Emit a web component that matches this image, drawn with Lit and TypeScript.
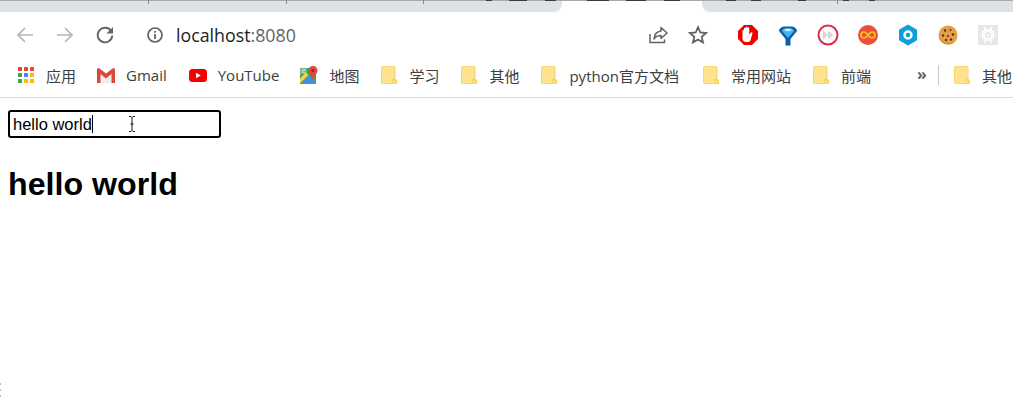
import { LitElement, html, css, svg } from "lit";
import { customElement } from "lit/decorators.js";

const folder = html`<svg class="ico fold" viewBox="0 0 16 18" width="16" height="18">
  <rect x=".5" y=".5" width="13.500" height="17" rx="1" fill="#fee28c" stroke="#f9d66e" stroke-width="1"/>
  <path d="M11.500 13h3l1.500 1v4h-4.500z" fill="#fbd155"/>
  <rect x="12.500" y="14.500" width="2" height="2.500" fill="#fee28c"/>
</svg>`;

const apps = html`<svg class="ico" viewBox="0 0 16 16" width="16" height="16">
  ${[0, 6, 12].map((y, r) =>
    [0, 6, 12].map((x, c) => {
      const colors = [
        ["#ea4335", "#ea4335", "#ea4335"],
        ["#34a853", "#4285f4", "#fbbc04"],
        ["#34a853", "#fbbc04", "#fbbc04"],
      ];
      return svg`<rect x=${x} y=${y} width="4" height="4" rx=".5" fill=${colors[r][c]} />`;
    })
  )}
</svg>`;

const gmail = html`<svg class="ico" viewBox="0 0 18 15" width="18" height="15">
  <path d="M3.500 5 9 9.500 14.500 5v10h-11z" fill="#eeeeee"/>
  <path d="M0 1.500C0 .3 1.500-.3 2.500.500L9 5.500 15.500.500C16.500-.3 18 .3 18 1.500V15h-3.500V6L9 10.500 3.500 6v9H0z" fill="#d8483d"/>
</svg>`;

const youtube = html`<svg class="ico" viewBox="0 0 18 13" width="18" height="13">
  <rect width="18" height="13" rx="3.500" fill="#f40000"/>
  <path d="M7 3.700v5.600L11.800 6.500z" fill="#fff"/>
</svg>`;

const maps = html`<svg class="ico" viewBox="0 0 18 18" width="18" height="18">
  <path d="M0 2h16v16H0z" fill="#35a853"/>
  <path d="M0 2h8L0 10z" fill="#7fb58a"/>
  <circle cx="4" cy="5.500" r="1.700" fill="none" stroke="#e8f3e8" stroke-width="1"/>
  <path d="M1.500 18 9 9.500l7 8.500z" fill="#4a8af4"/>
  <path d="M0 12.500 6 6.500l2.500 2.500L0 17.500z" fill="#fbd04a"/>
  <path d="M13 0c-2.700 0-4.500 2-4.500 4.500 0 3 3.500 5 4.500 10 1-5 4.500-7 4.500-10C17.500 2 15.700 0 13 0z" fill="#e0483c"/>
  <circle cx="13" cy="4.500" r="1.500" fill="#8f2a22"/>
</svg>`;

interface Mark { icon: unknown; label: string; cls: string }
const marks: Mark[] = [
  { icon: apps, label: "应用", cls: "tight" },
  { icon: gmail, label: "Gmail", cls: "wide" },
  { icon: youtube, label: "YouTube", cls: "wide tight" },
  { icon: maps, label: "地图", cls: "wide" },
  { icon: folder, label: "学习", cls: "" },
  { icon: folder, label: "其他", cls: "" },
  { icon: folder, label: "python官方文档", cls: "loose" },
  { icon: folder, label: "常用网站", cls: "" },
  { icon: folder, label: "前端", cls: "" },
];

const exts = [
  html`<svg viewBox="0 0 22 22" width="22" height="22">
    <path d="M7 1h8l6 6v8l-6 6H7l-6-6V7z" fill="#f40000"/>
    <path d="M5.500 11V6.500c0-1 1.500-1 1.500 0V4.500c0-1 1.700-1 1.700 0V3.500c0-1 1.800-1 1.800 0V4c0-1 1.700-1 1.700 0v6.500l1.800-2c.8-.8 2 0 1.400 1L13.500 16.500c-.5.8-1.200 1.500-2.500 1.500H9c-2 0-3.500-1.500-3.500-3.500z" fill="#fff"/>
  </svg>`,
  html`<svg viewBox="0 0 22 22" width="22" height="22">
    <path d="M2 7C2 4.500 5 2.500 8 2.500h6c3 0 6 2 6 4.500l-6.500 8v6.500h-5V15z" fill="#0b5fa8"/>
    <path d="M5 7c0-2 3-3 6-3s6 1 6 3l-6 7z" fill="#45b3ec"/>
    <path d="M7 6c1-1.500 7-1.500 8 0-2 1.500-6 1.500-8 0z" fill="#d6f1fd"/>
  </svg>`,
  html`<svg viewBox="0 0 22 22" width="22" height="22">
    <circle cx="11" cy="11" r="9.500" fill="#fff" stroke="#e5294b" stroke-width="2"/>
    <path d="M6 6.500v9l5-4.500zM11 6.500v9l5.500-4.500z" fill="#d5d5d5"/>
  </svg>`,
  html`<svg viewBox="0 0 22 22" width="22" height="22">
    <circle cx="11" cy="11" r="10" fill="#e9503d"/>
    <path d="M11 11c-1.500-2-2.500-3-4-3a3 3 0 0 0 0 6c1.500 0 2.500-1 4-3s2.500-3 4-3a3 3 0 0 1 0 6c-1.500 0-2.500-1-4-3z" fill="none" stroke="#fcc419" stroke-width="1.600"/>
  </svg>`,
  html`<svg viewBox="0 0 22 22" width="22" height="22">
    <path d="M11 .5 20 5.700v10.600L11 21.500 2 16.300V5.700z" fill="#0d9fdc"/>
    <circle cx="11" cy="11" r="3.500" fill="none" stroke="#fff" stroke-width="2.400"/>
  </svg>`,
  html`<svg viewBox="0 0 22 22" width="22" height="22">
    <circle cx="11" cy="11" r="9.500" fill="#e3a047"/>
    <path d="M2 12a9.500 9.500 0 0 0 18 3 10 10 0 0 1-18-3z" fill="#c67f2e"/>
    <circle cx="8" cy="6.500" r="1.300" fill="#5b3413"/><circle cx="13.500" cy="6" r="1" fill="#5b3413"/>
    <circle cx="16" cy="10.500" r="1.300" fill="#5b3413"/><circle cx="6" cy="11.500" r="1.200" fill="#5b3413"/>
    <circle cx="11" cy="12" r="1.100" fill="#5b3413"/><circle cx="9" cy="16" r="1.200" fill="#5b3413"/>
    <circle cx="14" cy="15.500" r="1.200" fill="#5b3413"/>
  </svg>`,
  html`<svg viewBox="0 0 20 20" width="20" height="20">
    <rect width="20" height="20" fill="#e6e6e6"/>
    <path d="M6 2h2v2h4V2h2v3l2 1v3l3 1-3 1v3l-2 1v3h-2v-2H8v2H6v-3l-2-1v-3l-3-1 3-1V6l2-1z" fill="#fafafa"/>
    <circle cx="10" cy="10" r="2.200" fill="none" stroke="#e0e0e0" stroke-width="1.200"/>
  </svg>`,
];

const dashes: [number, number][] = [
  [486, 6], [509, 18], [545, 11], [587, 22], [626, 20], [664, 16],
  [726, 10], [751, 10], [798, 8], [843, 6], [869, 6],
];
const ticks = [148, 286, 423, 837];

@customElement("app-root")
export class AppRoot extends LitElement {
  static styles = css`
    :host { display: block; height: 402px; background: #fff; overflow: hidden; position: relative;
      font-family: "Open Sans", "Noto Sans CJK SC", sans-serif; }
    .tabs { height: 12px; display: flex; border-top: 1px solid #a9a9ad; box-sizing: border-box; position: relative; }
    .strip { background: #dee1e6; }
    .strip.l { width: 562px; border-bottom-right-radius: 8px; }
    .gap { width: 140px; background: #fff; }
    .strip.r { flex: 1; border-bottom-left-radius: 8px; }
    .dash { position: absolute; top: -1px; height: 1px; background: #3a3a3a; }
    .tick { position: absolute; top: -1px; width: 1px; height: 4px; background: #8a8a8a; }
    .toolbar { height: 46px; padding-bottom: 2px; display: flex; align-items: center; padding-left: 5px; }
    .btn { width: 40px; height: 40px; display: flex; align-items: center; justify-content: center; flex: none; }
    .info { margin-left: 10px; width: 40px; }
    .url { font-size: 17.800px; color: #202124; white-space: nowrap; margin-left: 1px; flex: 1; }
    .url span { color: #5f6368; }
    .right { display: flex; margin-right: 5px; }
    .spacer { width: 10px; flex: none; }
    .bookmarks { height: 30px; padding-bottom: 7px; border-bottom: 1px solid #d9d9d9;
      display: flex; align-items: center; padding-left: 18px; overflow: hidden; white-space: nowrap; }
    .mark { display: flex; align-items: center; gap: 12px; margin-right: 22px; font-size: 15px; color: #3c4043; flex: none; }
    .mark.wide { gap: 11px; }
    .mark.tight { margin-right: 21px; }
    .mark.loose { margin-right: 24px; }
    .ico { display: block; flex: none; }
    .more { margin-left: 24px; width: 21px; font-size: 16px; font-weight: 700; color: #5f6368; flex: none; line-height: 1; padding-bottom: 3px; }
    .sep { width: 1px; height: 20px; background: #c8c8c8; margin-right: 15px; flex: none; }
    .page { padding: 12px 8px 0; font-family: "Liberation Sans", Arial, sans-serif; color: #000; }
    .field { width: 213px; height: 28px; box-sizing: border-box; border: 2px solid #000; border-radius: 3px;
      display: flex; align-items: center; padding-left: 3px; font-size: 16.500px; position: relative; }
    .caret { width: 1px; height: 18px; background: #000; }
    .beam { position: absolute; left: 118px; top: 4px; }
    h1 { margin: 28px 0 0; font-size: 32.200px; font-weight: 700; line-height: 37px; }
    .dots { position: absolute; left: 0; bottom: 1px; width: 1px; height: 18px;
      background: repeating-linear-gradient(#bbb 0 2px, transparent 2px 6px); }
  `;

  render() {
    return html`
      <div class="tabs">
        <div class="strip l"></div><div class="gap"></div><div class="strip r"></div>
        ${dashes.map(([x, w]) => html`<i class="dash" style="left:${x}px;width:${w}px"></i>`)}
        ${ticks.map((x) => html`<i class="tick" style="left:${x}px"></i>`)}
      </div>
      <div class="toolbar">
        <div class="btn"><svg viewBox="0 0 18 18" width="18" height="18"><path d="M17 9H2M9 2 2 9l7 7" fill="none" stroke="#b3b6ba" stroke-width="1.700"/></svg></div>
        <div class="btn"><svg viewBox="0 0 18 18" width="18" height="18"><path d="M1 9h15M9 2l7 7-7 7" fill="none" stroke="#b3b6ba" stroke-width="1.700"/></svg></div>
        <div class="btn"><svg viewBox="0 0 18 18" width="18" height="18"><path d="M15.200 5.200A7.300 7.300 0 1 0 16.300 9.500" fill="none" stroke="#5f6368" stroke-width="1.900"/><path d="M17 1v6.500h-6.500z" fill="#5f6368"/></svg></div>
        <div class="btn info"><svg viewBox="0 0 16 16" width="16" height="16"><circle cx="8" cy="8" r="7" fill="none" stroke="#5f6368" stroke-width="1.700"/><path d="M7.100 7h1.800v5H7.100zM7.100 4h1.800v1.800H7.100z" fill="#5f6368"/></svg></div>
        <div class="url">localhost<span>:8080</span></div>
        <div class="right">
          <div class="btn"><svg viewBox="0 0 20 20" width="20" height="20"><path d="M2 9V17.500h14.500v-3" fill="none" stroke="#5f6368" stroke-width="1.500"/><path d="M13 2.500 19 8l-6 5.500V10.500C9.500 10.500 7.500 11.500 6 14c.3-4.500 3-7.500 7-8z" fill="none" stroke="#5f6368" stroke-width="1.500" stroke-linejoin="round"/></svg></div>
          <div class="btn"><svg viewBox="0 0 20 20" width="20" height="20"><path d="M10 2.200 12.300 7.500l5.700.5-4.300 3.800 1.300 5.600L10 14.500l-5 2.900 1.300-5.600L2 8l5.700-.5z" fill="none" stroke="#5f6368" stroke-width="1.800" stroke-linejoin="miter"/></svg></div>
          <div class="spacer"></div>
          ${exts.map((e) => html`<div class="btn">${e}</div>`)}
        </div>
      </div>
      <div class="bookmarks">
        ${marks.map((m) => html`<div class="mark ${m.cls}">${m.icon}<span>${m.label}</span></div>`)}
        <div class="more">»</div>
        <div class="sep"></div>
        <div class="mark">${folder}<span>其他</span></div>
      </div>
      <div class="page">
        <div class="field">
          <span>hello world</span><span class="caret"></span>
          <svg class="beam" viewBox="0 0 8 16" width="8" height="16"><path d="M1 .5h2l1 1 1-1h2M4 1.500v13M1 15.500h2l1-1 1 1h2M2.500 8h3" fill="none" stroke="#111" stroke-width="1"/></svg>
        </div>
        <h1>hello world</h1>
      </div>
      <div class="dots"></div>
    `;
  }
}
